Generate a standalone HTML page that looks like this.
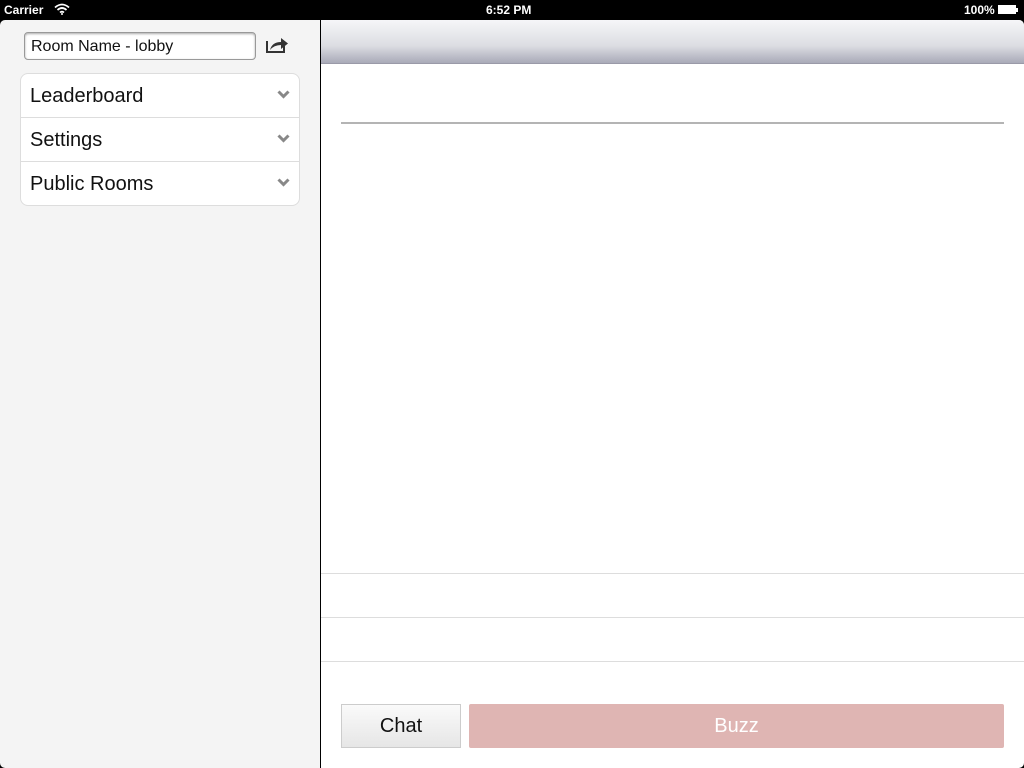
<!DOCTYPE html>
<html><head><style>
body{margin:0;width:1024px;height:768px;background:#000;position:relative;overflow:hidden;font-family:"Liberation Sans",sans-serif}
.sb{position:absolute;top:0;left:0;width:1024px;height:20px;color:#fff;font-size:12px;font-weight:bold}
.left{position:absolute;left:0;top:20px;width:320px;height:748px;background:#f4f4f4;border-radius:5px 0 0 5px}
.right{position:absolute;left:321px;top:20px;width:703px;height:748px;background:#fff;border-radius:0 5px 5px 0;overflow:hidden}
.inp{position:absolute;left:24px;top:12px;width:232px;height:28px;border:1px solid #999;border-radius:4px;background:#fff;box-sizing:border-box;font-size:16px;line-height:27px;padding-left:6px;color:#111;box-shadow:inset 0 1px 2px #aaa}
.list{position:absolute;left:20px;top:53px;width:280px;background:#fff;border:1px solid #ddd;border-radius:8px;box-sizing:border-box}
.row{height:43px;border-top:1px solid #ddd;font-size:20px;line-height:44px;padding-left:9px;position:relative;color:#111}
.row:first-child{border-top:none}
.row svg{position:absolute;right:9px;top:16px}
.hdr{height:43px;background:linear-gradient(#f6f6f8,#dcdde2 60%,#a9aab8);border-bottom:1px solid #9a9aa8}
.line{position:absolute;height:1px;background:#ddd;left:0;width:703px}
</style></head><body>
<div class="sb">
<span style="position:absolute;left:4px;top:3px">Carrier</span>
<svg style="position:absolute;left:54px;top:3px" width="16" height="12" viewBox="0 0 16 12"><path d="M1 4.5Q8-1.5 15 4.5M3.5 7Q8 3 12.5 7M6 9.5Q8 7.8 10 9.5" stroke="#fff" stroke-width="1.8" fill="none"/><circle cx="8" cy="11" r="1" fill="#fff"/></svg>
<span style="position:absolute;left:486px;top:3px">6:52 PM</span>
<span style="position:absolute;left:964px;top:3px">100%</span>
<div style="position:absolute;left:998px;top:5px;width:18px;height:9px;border:1px solid #fff;box-sizing:border-box;background:#fff"></div>
<div style="position:absolute;left:1016px;top:8px;width:2px;height:4px;background:#fff"></div>
</div>
<div class="left">
<div class="inp">Room Name - lobby</div>
<svg style="position:absolute;left:265px;top:14px" width="24" height="20" viewBox="0 0 24 20"><path d="M2 7V18H19V12" stroke="#333" stroke-width="2" fill="none"/><path d="M5 16Q7 8 16 8V4L23 9.5L16 15V11Q9 11 5 16Z" fill="#333"/></svg>
<div class="list">
<div class="row">Leaderboard<svg width="13" height="9" viewBox="0 0 13 9"><path d="M1.5 1.5L6.5 6.5L11.5 1.5" stroke="#888" stroke-width="3" fill="none"/></svg></div>
<div class="row">Settings<svg width="13" height="9" viewBox="0 0 13 9"><path d="M1.5 1.5L6.5 6.5L11.5 1.5" stroke="#888" stroke-width="3" fill="none"/></svg></div>
<div class="row">Public Rooms<svg width="13" height="9" viewBox="0 0 13 9"><path d="M1.5 1.5L6.5 6.5L11.5 1.5" stroke="#888" stroke-width="3" fill="none"/></svg></div>
</div>
</div>
<div class="right">
<div class="hdr"></div>
<div style="position:absolute;left:20px;top:102px;width:663px;height:2px;background:#b4b4b4"></div>
<div class="line" style="top:553px"></div>
<div class="line" style="top:597px"></div>
<div class="line" style="top:641px"></div>
<div style="position:absolute;left:20px;top:684px;width:118px;height:42px;border:1px solid #ccc;background:linear-gradient(#fafafa,#e6e6e6);font-size:20px;line-height:42px;text-align:center;color:#111">Chat</div>
<div style="position:absolute;left:148px;top:684px;width:535px;height:44px;background:#dfb5b3;border-radius:2px;font-size:20px;line-height:44px;text-align:center;color:#fff">Buzz</div>
</div>
</body></html>
